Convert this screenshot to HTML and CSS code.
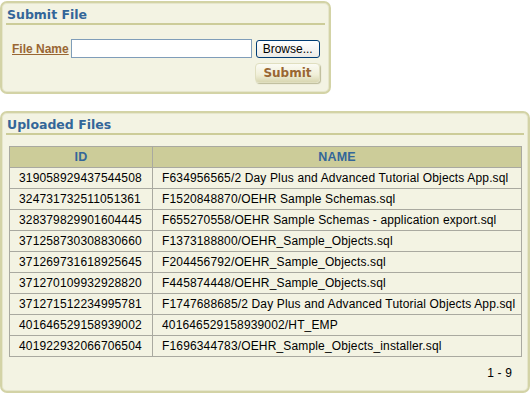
FILE: index.html
```html
<!doctype html>
<html lang="en">
  <head>
    <meta charset="utf-8">
    <title>Submit File</title>
    <link rel="stylesheet" href="styles.css">
  </head>
  <body>
    <div class="region submit-region">
      <h2 class="region-title">Submit File</h2>
      <div class="form-row">
        <label class="field-label" for="file">File Name</label>
        <input id="file" class="file-input" type="text">
        <button class="browse" type="button">Browse...</button>
      </div>
      <div class="button-row">
        <button class="submit" type="button">Submit</button>
      </div>
    </div>

    <div class="region files-region">
      <h2 class="region-title">Uploaded Files</h2>
      <table class="report">
        <thead>
          <tr><th class="col-id">ID</th><th>NAME</th></tr>
        </thead>
        <tbody>
          <tr><td>319058929437544508</td><td>F634956565/2 Day Plus and Advanced Tutorial Objects App.sql</td></tr>
          <tr><td>324731732511051361</td><td>F1520848870/OEHR Sample Schemas.sql</td></tr>
          <tr><td>328379829901604445</td><td>F655270558/OEHR Sample Schemas - application export.sql</td></tr>
          <tr><td>371258730308830660</td><td>F1373188800/OEHR_Sample_Objects.sql</td></tr>
          <tr><td>371269731618925645</td><td>F204456792/OEHR_Sample_Objects.sql</td></tr>
          <tr><td>371270109932928820</td><td>F445874448/OEHR_Sample_Objects.sql</td></tr>
          <tr><td>371271512234995781</td><td>F1747688685/2 Day Plus and Advanced Tutorial Objects App.sql</td></tr>
          <tr><td>401646529158939002</td><td>401646529158939002/HT_EMP</td></tr>
          <tr><td>401922932066706504</td><td>F1696344783/OEHR_Sample_Objects_installer.sql</td></tr>
        </tbody>
      </table>
      <div class="pagination">1 - 9</div>
    </div>
  </body>
</html>
```

FILE: styles.css
```css
html {
  background: #ffffff;
}

body {
  margin: 0;
  padding-top: 1px;
  font-family: "Liberation Sans", Arial, sans-serif;
  font-size: 12px;
  letter-spacing: 0.15px;
  color: #000000;
}

.region {
  box-sizing: border-box;
  background-color: #f3f3e3;
  border: 2px solid #d3d3a6;
  border-radius: 7px;
  box-shadow: inset 0 0 0 1px #e6e6cc;
}

.submit-region {
  width: 331px;
  height: 93px;
}

.files-region {
  width: 530px;
  height: 282px;
  margin-top: 17px;
}

.region-title {
  margin: 0 4px;
  padding: 4px 0 1px 1px;
  font-family: "DejaVu Sans", Verdana, sans-serif;
  font-size: 12.5px;
  font-weight: bold;
  line-height: 15px;
  letter-spacing: 0;
  color: #336699;
  border-bottom: 2px solid #cccc99;
}

/* submit form */
.form-row {
  display: flex;
  align-items: center;
  padding: 14px 0 0 10px;
}

.field-label {
  flex-shrink: 0;
  white-space: nowrap;
  font-family: "Liberation Sans", Arial, sans-serif;
  font-size: 12px;
  font-weight: bold;
  letter-spacing: 0;
  color: #996633;
  text-decoration: underline;
}

.file-input {
  box-sizing: border-box;
  flex-shrink: 0;
  width: 181px;
  height: 19px;
  margin: 0 0 0 2px;
  border: 1px solid #7f9db9;
  background: #ffffff;
}

.browse {
  box-sizing: border-box;
  flex-shrink: 0;
  width: 64px;
  height: 18px;
  margin-left: 4px;
  padding: 0;
  font-family: "Liberation Sans", Arial, sans-serif;
  font-size: 12px;
  color: #000000;
  background: linear-gradient(#ffffff, #ecebe6);
  border: 1px solid #003c74;
  border-radius: 3px;
}

.button-row {
  display: flex;
  justify-content: flex-end;
  padding: 5px 9px 0 0;
}

.submit {
  box-sizing: border-box;
  width: 65px;
  height: 20px;
  padding: 0;
  font-family: "DejaVu Sans", Verdana, sans-serif;
  font-size: 12px;
  font-weight: bold;
  color: #996633;
  background: linear-gradient(#fbfbf4, #f0efd8 60%, #d9d7b2);
  border: 1px solid #e0dfc0;
  border-radius: 4px;
  box-shadow: 1px 1px 1px #bcbb98;
}

/* report */
.report {
  width: 513px;
  margin: 11px 0 0 7px;
  border-collapse: collapse;
}

.report th,
.report td {
  height: 20px;
  padding: 0 0 0 9px;
  border: 1px solid #a9a9a0;
  line-height: 20px;
  white-space: nowrap;
}

.report th {
  padding: 0;
  background-color: #cccc99;
  color: #336699;
  font-size: 12.5px;
  font-weight: bold;
  text-align: center;
}

.report .col-id {
  width: 142px;
}

.report td {
  text-align: left;
}

.pagination {
  padding: 9px 16px 0 0;
  text-align: right;
}
```
